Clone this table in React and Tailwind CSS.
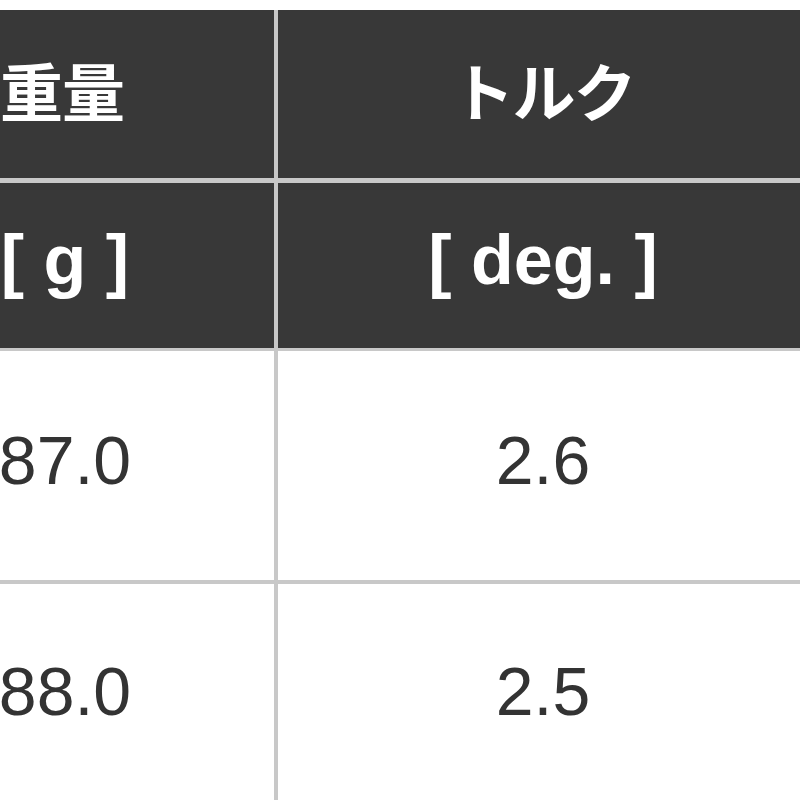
import React from "react";

const jp = { fontFamily: '"Liberation Sans", "Noto Sans CJK JP", sans-serif' };

function Row({ left, right, cls, h, head, pad = "" }) {
  const txt = head ? "text-white font-bold" : "text-[#333333]";
  return (
    <div className={`flex box-border ${h} ${cls}`}>
      <div
        className={`w-[422px] box-border border-r-[4px] border-[#c8c8c8] flex items-center justify-center ${pad} ${txt}`}
      >
        {left}
      </div>
      <div className={`w-[530px] box-border flex items-center justify-center ${pad} ${txt}`}>
        {right}
      </div>
    </div>
  );
}

export default function App() {
  return (
    <div className="w-[800px] h-[800px] overflow-hidden bg-white pt-[10px]" style={jp}>
      <div className="ml-[-144px] w-[952px]">
        <Row
          head
          h="h-[173px]"
          cls="bg-[#383838] border-b-[5px] border-[#c8c8c8] text-[63px]"
          left={<span className="tracking-[-1px] mr-[6px]">重量</span>}
          right={<span className="tracking-[-2px]">トルク</span>}
        />
        <Row
          head
          h="h-[168px]"
          pad="pb-[10px]"
          cls="bg-[#383838] border-b-[3px] border-[#c8c8c8] text-[70px]"
          left={<span>[ g ]</span>}
          right={<span>[ deg. ]</span>}
        />
        <Row
          h="h-[233px]"
          pad="pb-[12px]"
          cls="bg-white border-b-[4px] border-[#c8c8c8] text-[68px]"
          left={<span>87.0</span>}
          right={<span>2.6</span>}
        />
        <Row
          h="h-[226px]"
          pad="pb-[12px]"
          cls="bg-white text-[68px]"
          left={<span>88.0</span>}
          right={<span>2.5</span>}
        />
      </div>
    </div>
  );
}
